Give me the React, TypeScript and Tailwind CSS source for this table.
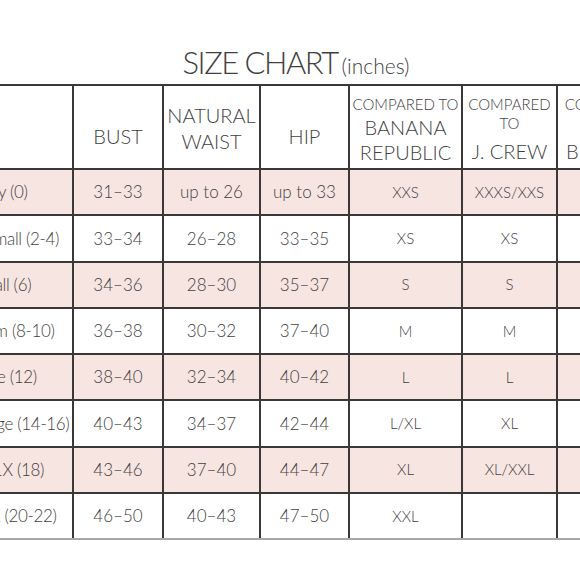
import React from 'react'

const rows = [
  ['Tiny (0)', '31–33', 'up to 26', 'up to 33', 'XXS', 'XXXS/XXS', ''],
  ['Extra Small (2-4)', '33–34', '26–28', '33–35', 'XS', 'XS', ''],
  ['Small (6)', '34–36', '28–30', '35–37', 'S', 'S', ''],
  ['Medium (8-10)', '36–38', '30–32', '37–40', 'M', 'M', ''],
  ['Large (12)', '38–40', '32–34', '40–42', 'L', 'L', ''],
  ['Extra Large (14-16)', '40–43', '34–37', '42–44', 'L/XL', 'XL', ''],
  ['Plus 1X (18)', '43–46', '37–40', '44–47', 'XL', 'XL/XXL', ''],
  ['Plus 2X (20-22)', '46–50', '40–43', '47–50', 'XXL', '', ''],
]

const cell = 'border-2 border-[#3b3838] text-center align-middle p-0 whitespace-nowrap overflow-hidden'
const head = 'border-2 border-[#3b3838] text-center align-bottom p-0 whitespace-nowrap overflow-hidden'

export default function App() {
  return (
    <div
      className="w-[580px] h-[580px] overflow-hidden bg-white text-[#433f3f]"
      style={{ fontFamily: 'Lato, "Noto Sans", sans-serif' }}
    >
      {/* Title */}
      <div className="flex justify-center items-baseline pt-[47px] pl-[12px] h-[84px]">
        <h1 className="text-[31px] leading-none font-light tracking-[-1.5px]">SIZE CHART</h1>
        <span className="text-[21px] leading-none font-light ml-[4px]">(inches)</span>
      </div>

      {/* Chart */}
      <table className="table-fixed border-collapse ml-[-70px] w-[724px]">
        <colgroup>
          <col className="w-[142px]" />
          <col className="w-[90px]" />
          <col className="w-[97px]" />
          <col className="w-[89px]" />
          <col className="w-[113px]" />
          <col className="w-[95px]" />
          <col className="w-[98px]" />
        </colgroup>
        <thead>
          <tr className="h-[84px]">
            <th className={head} />
            <th className={`${head} pb-[19px] text-[20px] leading-[25px] font-light`}>BUST</th>
            <th className={`${head} pb-[14px] text-[20px] leading-[26px] font-light`}>
              NATURAL
              <br />
              WAIST
            </th>
            <th className={`${head} pb-[19px] text-[20px] leading-[25px] font-light`}>HIP</th>
            <th className={`${head} pb-[3px] font-light`}>
              <div className="text-[15px] leading-[21px]">COMPARED TO</div>
              <div className="text-[20px] leading-[25px]">BANANA</div>
              <div className="text-[20px] leading-[25px]">REPUBLIC</div>
            </th>
            <th className={`${head} pb-[4px] font-light`}>
              <div className="text-[15px] leading-[19px]">COMPARED</div>
              <div className="text-[15px] leading-[19px]">TO</div>
              <div className="text-[20px] leading-[25px] mt-[6px]">J. CREW</div>
            </th>
            <th className={`${head} pb-[4px] font-light`}>
              <div className="text-[15px] leading-[19px]">COMPARED</div>
              <div className="text-[15px] leading-[19px]">TO</div>
              <div className="text-[20px] leading-[25px] mt-[6px]">BROOKS</div>
            </th>
          </tr>
        </thead>
        <tbody>
          {rows.map((r, i) => (
            <tr
              key={i}
              className={`h-[46.25px] text-[17px] font-light ${i % 2 === 0 ? 'bg-[#f7e5e2]' : 'bg-white'} ${
                i === rows.length - 1 ? '[&>td]:border-b-[#a8a6a6]' : ''
              }`}
            >
              {r.map((v, j) => (
                <td
                  key={j}
                  className={`${cell} ${j >= 4 ? 'text-[15px]' : ''} ${j === 0 ? 'tracking-[-0.35px]' : ''}`}
                >
                  {v}
                </td>
              ))}
            </tr>
          ))}
        </tbody>
      </table>
    </div>
  )
}
